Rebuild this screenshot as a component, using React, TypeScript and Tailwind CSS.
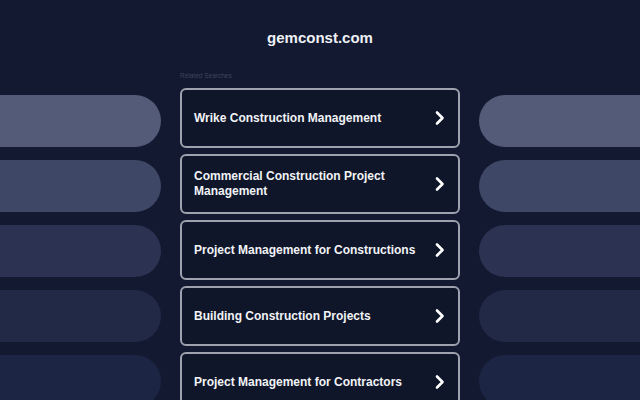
const searches = [
  'Wrike Construction Management',
  'Commercial Construction Project Management',
  'Project Management for Constructions',
  'Building Construction Projects',
  'Project Management for Contractors',
];

const pillColors = ['bg-[#535b79]', 'bg-[#3f4766]', 'bg-[#2b3252]', 'bg-[#212947]', 'bg-[#1d2545]'];

function Chevron() {
  return (
    <svg width="12" height="16" viewBox="0 0 12 16" fill="none" className="shrink-0">
      <path d="M3 2.5 L8.5 8 L3 13.5" stroke="white" strokeWidth="2.6" strokeLinecap="round" strokeLinejoin="round" />
    </svg>
  );
}

function Pills({ side }: { side: 'left' | 'right' }) {
  return (
    <div className="flex flex-1 flex-col gap-[13px] pt-[7px]">
      {pillColors.map((c) => (
        <div
          key={c}
          className={`h-[52px] shrink-0 ${c} ${side === 'left' ? 'rounded-r-[26px]' : 'rounded-l-[26px]'}`}
        />
      ))}
    </div>
  );
}

export default function App() {
  return (
    <div
      className="h-[400px] w-[640px] overflow-hidden bg-[#121930] text-white"
      style={{ fontFamily: '"Liberation Sans", Arial, sans-serif' }}
    >
      <h1 className="pt-[29px] text-center text-[15px] font-bold leading-[18px] text-[#eef0f5]">gemconst.com</h1>
      <div className="mx-auto mt-[25px] w-[280px] text-[6.5px] leading-[8px] text-[#3d4560]">Related Searches</div>
      <div className="mt-[8px] flex gap-[19px]">
        <Pills side="left" />
        <div className="flex w-[280px] shrink-0 flex-col gap-[6px]">
          {searches.map((s) => (
            <div
              key={s}
              className="flex h-[60px] shrink-0 items-center justify-between rounded-[6px] border-2 border-[#9ea2ae] bg-[#0f1629] pl-[12px] pr-[12px]"
            >
              <span className="pr-2 text-[12px] font-bold leading-[15px] text-[#f2f3f7]">{s}</span>
              <Chevron />
            </div>
          ))}
        </div>
        <Pills side="right" />
      </div>
    </div>
  );
}
